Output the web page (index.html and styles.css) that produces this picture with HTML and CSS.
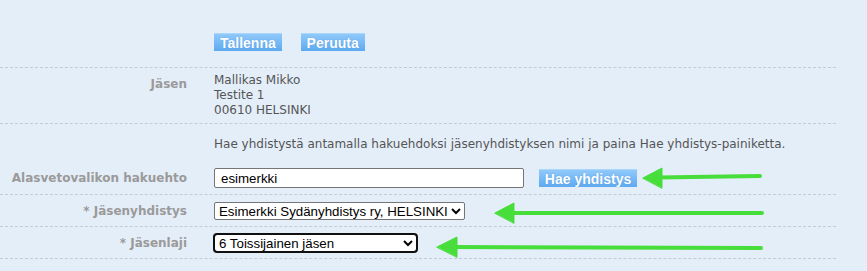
FILE: index.html
```
<!DOCTYPE html>
<html lang="fi">
<head>
    <meta charset="UTF-8">
    <title>Jäsentiedot</title>
    <link rel="stylesheet" href="styles.css">
</head>
<body>
    <div class="form">
        <div class="row row-actions">
            <div class="label"></div>
            <div class="value">
                <button class="btn" type="button">Tallenna</button>
                <button class="btn" type="button">Peruuta</button>
            </div>
        </div>
        <div class="row row-member">
            <div class="label">Jäsen</div>
            <div class="value">
                Mallikas Mikko<br>
                Testite 1<br>
                00610 HELSINKI
            </div>
        </div>
        <div class="row row-info no-line">
            <div class="label"></div>
            <div class="value">Hae yhdistystä antamalla hakuehdoksi jäsenyhdistyksen nimi ja paina Hae yhdistys-painiketta.</div>
        </div>
        <div class="row row-search">
            <div class="label">Alasvetovalikon hakuehto</div>
            <div class="value">
                <input class="search" type="text" value="esimerkki">
                <button class="btn btn-search" type="button">Hae yhdistys</button>
            </div>
        </div>
        <div class="row row-select">
            <div class="label">* Jäsenyhdistys</div>
            <div class="value">
                <select class="select-assoc">
                    <option>Esimerkki Sydänyhdistys ry, HELSINKI</option>
                </select>
            </div>
        </div>
        <div class="row row-select">
            <div class="label">* Jäsenlaji</div>
            <div class="value">
                <select class="select-type focused">
                    <option>6 Toissijainen jäsen</option>
                </select>
            </div>
        </div>
    </div>

    <!-- ohjenuolet kuvakaappauksen päällä -->
    <svg class="arrows" width="867" height="271" viewBox="0 0 867 271">
        <g fill="#47dd3a" stroke="#47dd3a" stroke-linecap="round">
            <line x1="658" y1="177.5" x2="760" y2="176" stroke-width="4"/>
            <polygon points="643,178 662,168 662,188" stroke-width="1" stroke-linejoin="round"/>
            <line x1="510" y1="213" x2="762" y2="213" stroke-width="4"/>
            <polygon points="495,213 514,203 514,223" stroke-width="1" stroke-linejoin="round"/>
            <line x1="452" y1="247" x2="761" y2="248" stroke-width="4"/>
            <polygon points="437,247 457,237 457,257" stroke-width="1" stroke-linejoin="round"/>
        </g>
    </svg>
</body>
</html>
```
FILE: styles.css
```
body {
    margin: 0;
    background-color: #e4eef9;
    font-family: "DejaVu Sans", Verdana, sans-serif;
    font-size: 12px;
    color: #555555;
    position: relative;
}
.form {
    width: 836px;
}
.row {
    display: grid;
    grid-template-columns: 187px 1fr;
    column-gap: 27px;
    border-bottom: 1px dashed #c3cbd4;
}
.row.no-line {
    border-bottom: none;
}
.label {
    text-align: right;
    font-weight: bold;
    color: #9a9a9a;
    font-size: 12px;
}
.value {
    line-height: 15px;
}
.row-actions {
    height: 68px;
    box-sizing: border-box;
    padding-top: 33px;
}
.row-member {
    padding: 5px 0 5px;
}
.row-member .label {
    padding-top: 4px;
}
.row-info {
    padding-top: 13px;
    height: 23px;
}
.row-search {
    align-items: center;
    padding: 8px 0 6px;
}
.row-select {
    align-items: center;
    padding: 6px 0 6px;
    height: 19px;
}
.btn {
    font-family: "Liberation Sans", Arial, sans-serif;
    font-size: 14px;
    font-weight: bold;
    color: #ffffff;
    height: 18px;
    line-height: 16px;
    padding: 0 6px;
    border: none;
    border-top: 1px solid #a9d6fb;
    background: linear-gradient(#90c9fa, #5ea9f0);
    text-shadow: 0 0 1px #4a90d8;
    vertical-align: top;
    margin-right: 15px;
}
.btn-search {
    margin-left: 11px;
    margin-top: 1px;
}
.search {
    width: 310px;
    height: 20px;
    box-sizing: border-box;
    border: 1px solid #767676;
    border-radius: 2px;
    padding: 0 6px;
    font-family: "Liberation Sans", Arial, sans-serif;
    font-size: 13.3px;
    color: #000000;
    background: #ffffff;
    vertical-align: top;
}
select {
    height: 18px;
    box-sizing: border-box;
    font-family: "Liberation Sans", Arial, sans-serif;
    font-size: 13.3px;
    color: #000000;
    background: #ffffff;
    border: 1px solid #767676;
    border-radius: 2px;
    padding: 0;
}
.select-assoc {
    width: 251px;
}
.select-type {
    width: 203px;
}
.select-type.focused {
    outline: 2px solid #101010;
    outline-offset: -1px;
    border-radius: 3px;
}
.arrows {
    position: absolute;
    top: 0;
    left: 0;
    pointer-events: none;
}
```
